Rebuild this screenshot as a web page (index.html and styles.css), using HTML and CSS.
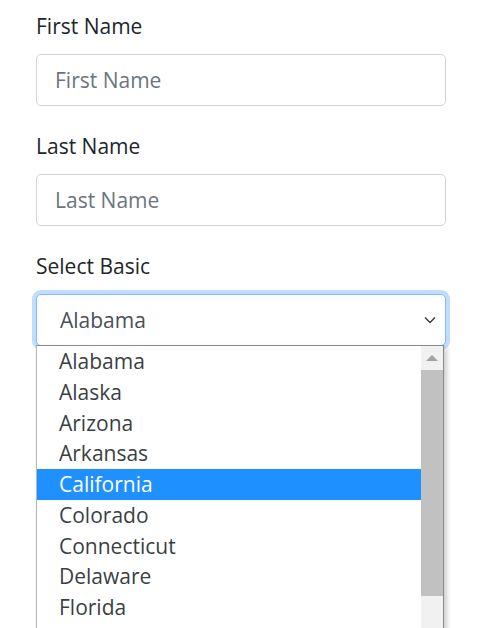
FILE: index.html
```html
<!DOCTYPE html>
<html lang="en">
<head>
<meta charset="utf-8">
<title>Form</title>
<link rel="stylesheet" href="styles.css">
</head>
<body>
<form class="form">
  <div class="field">
    <label class="label" for="first">First Name</label>
    <input class="input" id="first" type="text" placeholder="First Name">
  </div>
  <div class="field">
    <label class="label" for="last">Last Name</label>
    <input class="input" id="last" type="text" placeholder="Last Name">
  </div>
  <div class="field">
    <label class="label">Select Basic</label>
    <div class="select-wrap">
      <div class="select">
        <span class="select-value">Alabama</span>
        <svg class="chevron" width="12" height="8" viewBox="0 0 12 8"><path d="M1 1.5 L6 6.5 L11 1.5" fill="none" stroke="#343a40" stroke-width="1.4"/></svg>
      </div>
      <div class="dropdown">
        <ul class="options">
          <li class="option">Alabama</li>
          <li class="option">Alaska</li>
          <li class="option">Arizona</li>
          <li class="option">Arkansas</li>
          <li class="option selected">California</li>
          <li class="option">Colorado</li>
          <li class="option">Connecticut</li>
          <li class="option">Delaware</li>
          <li class="option">Florida</li>
        </ul>
        <div class="scrollbar">
          <div class="scroll-btn"><span class="arrow-up"></span></div>
          <div class="scroll-thumb"></div>
          <div class="scroll-track"></div>
        </div>
      </div>
    </div>
  </div>
</form>
</body>
</html>
```
FILE: styles.css
```css
html, body {
  margin: 0;
  padding: 0;
  background: #fff;
}
body {
  height: 628px;
  overflow: hidden;
  font-family: "Open Sans", "Noto Sans", sans-serif;
  color: #212529;
}
.form {
  width: 410px;
  padding: 9px 0 0 36px;
}
.field {
  margin-bottom: 23px;
}
.label {
  display: block;
  font-size: 21px;
  line-height: 34px;
  margin-bottom: 11px;
  color: #212529;
}
.input {
  display: block;
  box-sizing: border-box;
  width: 410px;
  height: 52px;
  margin: 0;
  padding: 0 18px;
  border: 1px solid #ced4da;
  border-radius: 5px;
  font-family: inherit;
  font-size: 21px;
  color: #495057;
  background: #fff;
  outline: none;
}
.input::placeholder {
  color: #6c757d;
}
.select-wrap {
  position: relative;
}
.select {
  box-sizing: border-box;
  height: 52px;
  border: 1px solid #80bdff;
  border-radius: 5px;
  box-shadow: 0 0 0 4px rgba(0, 123, 255, 0.25);
  display: flex;
  align-items: center;
  justify-content: space-between;
  padding: 0 9px 0 23px;
  background: #fff;
}
.select-value {
  font-size: 21px;
  color: #495057;
}
.chevron {
  display: block;
}
.dropdown {
  position: absolute;
  top: 51px;
  left: 0;
  width: 408px;
  height: 300px;
  box-sizing: border-box;
  background: #fff;
  border: 1px solid #8a8a8a;
  border-left-color: #b5b5b5;
  box-shadow: 3px 3px 5px rgba(0, 0, 0, 0.2);
  display: flex;
}
.options {
  list-style: none;
  margin: 0;
  padding: 0;
  flex: 1;
}
.option {
  height: 30.75px;
  line-height: 30.75px;
  padding-left: 22px;
  font-size: 21px;
  color: #3a3f44;
}
.option.selected {
  background: #1e90ff;
  color: #fff;
}
.scrollbar {
  width: 22px;
  display: flex;
  flex-direction: column;
  background: #f1f1f1;
}
.scroll-btn {
  height: 24px;
  display: flex;
  align-items: center;
  justify-content: center;
}
.arrow-up {
  width: 0;
  height: 0;
  border-left: 6px solid transparent;
  border-right: 6px solid transparent;
  border-bottom: 6px solid #a3a3a3;
}
.scroll-thumb {
  height: 226px;
  background: #c1c1c1;
}
.scroll-track {
  flex: 1;
}
```
